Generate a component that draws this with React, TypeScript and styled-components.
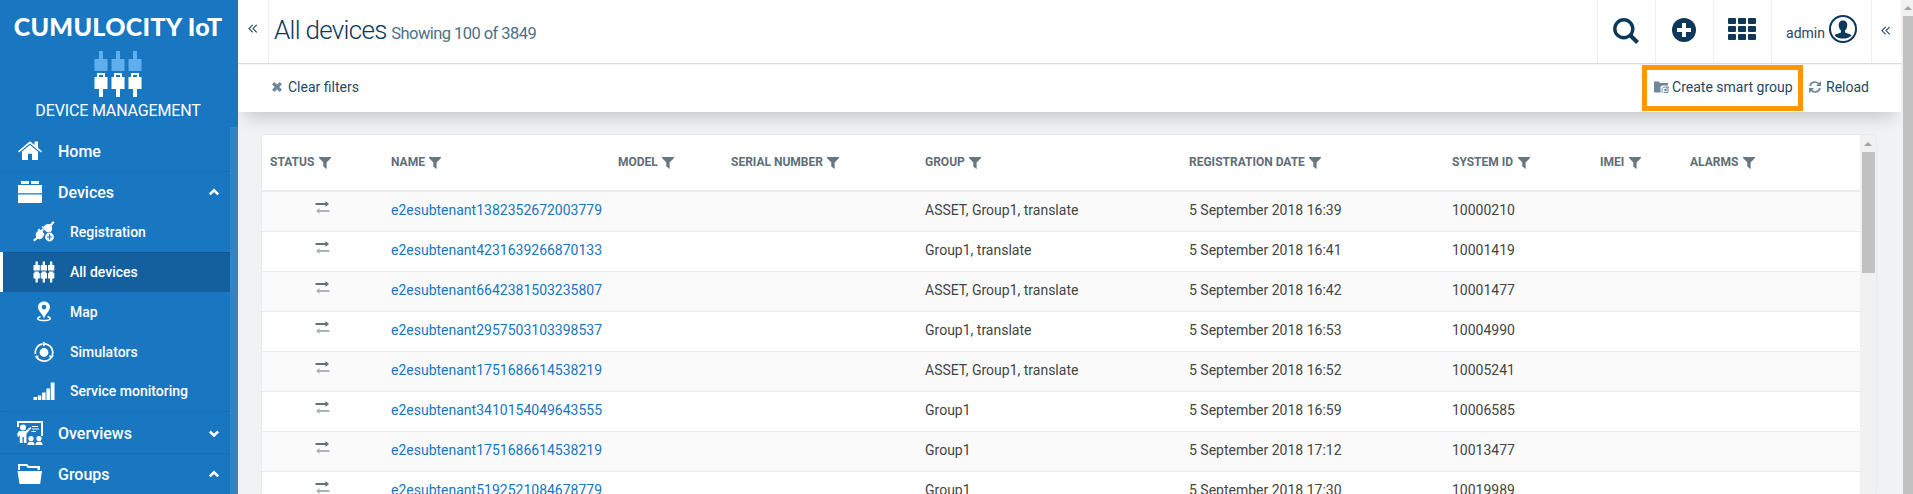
import React from "react";
import styled, { createGlobalStyle, css } from "styled-components";

const Global = createGlobalStyle`
  * { box-sizing: border-box; }
  html, body { margin: 0; padding: 0; overflow: hidden; }
  body { font-family: Roboto, "Liberation Sans", sans-serif; font-size: 14px; color: #444; background: #f0f2f4; }
`;

const Page = styled.div`
  display: flex;
  width: 1913px;
  height: 494px;
  overflow: hidden;
`;

/* ---------- sidebar ---------- */
const Sidebar = styled.aside`
  width: 238px;
  flex: none;
  position: relative;
  z-index: 1;
  background: #1976c1;
  color: #fff;
`;
const Brand = styled.div`
  height: 127px;
  display: flex;
  flex-direction: column;
  align-items: center;
  padding: 12px 2px 0 0;
`;
const Logo = styled.div`
  font: 900 25px/29px Lato, sans-serif;
  white-space: nowrap;
  letter-spacing: 0.3px;
`;
const PlugLogo = styled.svg`
  display: block;
  margin-top: 10px;
`;
const AppName = styled.div`
  font-size: 16px;
  line-height: 20px;
  margin-top: 4px;
  letter-spacing: -0.15px;
  white-space: nowrap;
`;
const NavArea = styled.div`
  display: flex;
  height: 367px;
`;
const Nav = styled.nav`
  width: 230px;
  padding-top: 3px;
`;
const NavScroll = styled.div`
  width: 8px;
  background: #3085c7;
`;
const NavItem = styled.div<{ $gap?: boolean }>`
  height: ${(p) => (p.$gap ? 42 : 40)}px;
  display: flex;
  align-items: center;
  padding: 1px 10px 0 17px;
  border-bottom: 1px solid ${(p) => (p.$gap ? "#176eb5" : "transparent")};
  font-size: 16px;
  font-weight: 500;
`;
const NavLabel = styled.span`
  flex: 1;
  margin-left: 15px;
`;
const SubItem = styled.div<{ $active?: boolean; $last?: boolean }>`
  height: 40px;
  display: flex;
  align-items: center;
  padding: 0 0 1px 30px;
  font-size: 14px;
  font-weight: 500;
  border-left: 3px solid transparent;
  ${(p) => p.$last && css`border-bottom: 1px solid #176eb5;`}
  ${(p) =>
    p.$active &&
    css`
      background: #14609f;
      border-left-color: #fff;
      box-shadow: inset 0 1px 0 #125690;
    `}
`;
const SubLabel = styled.span`
  margin-left: 15px;
`;

/* ---------- main ---------- */
const Main = styled.main`
  width: 1663px;
  flex: none;
  display: flex;
  flex-direction: column;
`;
const Header = styled.header`
  height: 64px;
  display: flex;
  background: #fff;
  border-bottom: 1px solid #d9dcdf;
  color: #0b385b;
`;
const Toggle = styled.div`
  width: 31px;
  padding-top: 24px;
  display: flex;
  justify-content: center;
  align-items: flex-start;
  border-right: 1px solid #eef0f1;
`;
const Title = styled.h1`
  margin: 0;
  padding: 13px 0 0 5px;
  flex: 1;
  font-size: 26px;
  line-height: 34px;
  font-weight: 300;
  letter-spacing: -0.7px;
`;
const Count = styled.small`
  font-size: 16.5px;
  font-weight: 400;
  color: #4e6f88;
  letter-spacing: -0.56px;
  margin-left: -1px;
`;
const HeadCell = styled.div<{ $w: number; $top: number; $right?: number }>`
  width: ${(p) => p.$w}px;
  display: flex;
  justify-content: center;
  align-items: flex-start;
  padding: ${(p) => p.$top}px ${(p) => p.$right ?? 2}px 0 0;
  border-left: 1px solid #eef0f1;
`;
const User = styled.span`
  font-size: 14px;
  line-height: 16px;
  margin: 10px 4px 0 0;
  color: #23496a;
`;
const Actions = styled.div`
  height: 48px;
  display: flex;
  justify-content: space-between;
  align-items: flex-start;
  background: #fff;
  box-shadow: inset 0 1px 0 #f3f4f5, 0 11px 18px -7px rgba(0, 0, 0, 0.2);
  padding: 0 32px 0 34px;
  color: #23496a;
`;
const ActionGroup = styled.div`
  display: flex;
`;
const Action = styled.div<{ $gap: number }>`
  display: flex;
  align-items: center;
  gap: ${(p) => p.$gap}px;
  height: 46px;
  white-space: nowrap;
  svg { color: #6d8799; }
`;
const Highlight = styled.div`
  height: 46px;
  margin: 1px 6px 0 0;
  width: 161px;
  border: 5px solid #ff9800;
  display: flex;
  align-items: flex-start;
  padding-left: 7px;
  ${Action} { height: 34px; }
`;
const Content = styled.section`
  padding: 23px 25px 0 24px;
`;
const Card = styled.div`
  display: flex;
  height: 359px;
  overflow: hidden;
  background: #fff;
  border-radius: 3px 3px 0 0;
  box-shadow: 0 0 2px rgba(0, 0, 0, 0.12);
`;
const Table = styled.table`
  width: 1598px;
  table-layout: fixed;
  border-collapse: separate;
  border-spacing: 0;
`;
const Th = styled.th`
  height: 57px;
  padding: 0 0 2px 8px;
  border-bottom: 2px solid #e9eaeb;
  text-align: left;
  font-size: 12px;
  font-weight: 700;
  color: #5f6e79;
  white-space: nowrap;
  svg { margin-left: 4.5px; vertical-align: -3px; }
`;
const Tr = styled.tr<{ $odd: boolean }>`
  background: ${(p) => (p.$odd ? "#fafafa" : "#fff")};
`;
const Td = styled.td`
  height: 40px;
  padding: 0 0 3px 8px;
  border-bottom: 1px solid #e9eaeb;
  white-space: nowrap;
`;
const StatusTd = styled(Td)`
  padding: 0 0 8px 53px;
  svg { display: block; }
`;
const Link = styled.a`
  color: #1776bf;
`;
const CardScroll = styled.div`
  width: 17px;
  background: #f1f1f1;
  display: flex;
  flex-direction: column;
  align-items: center;
  padding-top: 6px;
`;
const Thumb = styled.div<{ $w: number; $h: number }>`
  width: ${(p) => p.$w}px;
  height: ${(p) => p.$h}px;
  background: #c1c1c1;
  margin-top: 6px;
`;
const PageScroll = styled.div`
  width: 12px;
  flex: none;
  background: #f1f1f1;
  display: flex;
  flex-direction: column;
  align-items: flex-end;
  padding-top: 5px;
`;
const Arrow = styled.i`
  width: 0;
  height: 0;
  border: 4px solid transparent;
  border-top-width: 0;
  border-bottom-color: #a3a3a3;
  margin-top: 1px;
  margin-right: 1px;
`;

/* ---------- icons ---------- */
const Chevrons = () => (
  <svg width="10" height="10" viewBox="0 0 10 10" fill="none" stroke="#23496a" strokeWidth="1.1">
    <path d="M4.7 .8 1 4.6 4.7 8.4M8.7 .8 5 4.6 8.7 8.4" />
  </svg>
);
const Caret = ({ up }: { up?: boolean }) => (
  <svg width="12" height="9" viewBox="0 0 12 9" fill="none" stroke="#fff" strokeWidth="2.5">
    <path d={up ? "M1.8 6.3 6 2.3 10.2 6.3" : "M1.8 2.5 6 6.5 10.2 2.5"} />
  </svg>
);
const Funnel = () => (
  <svg width="12" height="12" viewBox="0 0 12 12" fill="#667782">
    <path d="M0 0H12V1L7.6 5.6V12L4.3 9.4V5.6L0 1Z" />
  </svg>
);
const Exchange = () => (
  <svg width="15" height="13" viewBox="0 0 15 13">
    <path d="M.5 2H10.5V0L14 3 10.5 6V4H.5Z" fill="#61717d" />
    <path d="M14.5 9H4.5V7L1 10 4.5 13V11H14.5Z" fill="#a9b4bb" />
  </svg>
);
const HomeIcon = () => (
  <svg width="26" height="24" viewBox="0 0 26 24" fill="#fff">
    <path d="M1 12.2 12.9 2.2 17.5 6V2.5H21V9L25 12.2 24 13.5 12.9 4.4 2 13.5Z" />
    <path d="M5 12.6 12.9 6 21 12.6V21H15V14.7H11V21H5Z" />
  </svg>
);
const DevicesIcon = () => (
  <svg width="26" height="24" viewBox="0 0 26 24" fill="#fff">
    <path d="M4 1H12V4H4ZM14 1H22V4H14ZM1 5H25V13.2H1ZM1 14.5H25V23H1Z" />
  </svg>
);
const OverviewIcon = () => (
  <svg width="26" height="26" viewBox="0 0 26 26" fill="#fff">
    <path d="M0 1H26V16H24V3H2V7H0Z" />
    <path d="M15 6H21V7H15ZM15 8.5H22V9.5H15ZM14.5 11H19V12H14.5Z" />
    <circle cx="6" cy="7.5" r="3" />
    <path d="M2 11H8.5L13.5 7 14.5 8.2 9.5 13.5V23H6.8V17H5.5V23H2.8V15L1 17.5 .2 14Z" />
    <circle cx="14" cy="18.5" r="2.6" /><circle cx="22" cy="18.5" r="2.6" />
    <path d="M10.5 25C10.5 22 12 21.7 14 21.7S17.5 22 17.5 25ZM18.5 25C18.5 22 20 21.7 22 21.7S25.5 22 25.5 25Z" />
  </svg>
);
const FolderIcon = () => (
  <svg width="26" height="24" viewBox="0 0 26 24" fill="#fff">
    <path d="M1 2H10L12 4H23V8H20.5V6H11L9 4H3V8H1ZM.5 9H25L23.2 22H2.5Z" />
  </svg>
);
const RegistrationIcon = () => (
  <svg width="22" height="21" viewBox="0 0 22 21" fill="#fff">
    <path d="M20 0 21.5 1.5 18.5 5C20 8 18.5 10.5 16.5 12L10.5 6C12.5 3 15 2.5 17 3.5Z" />
    <path d="M9.5 5 18 13 16.8 14 8.5 6Z" />
    <path d="M4.5 9 6 7.5 7.7 9.2 9.5 7.5 11 9 9.5 11 11.5 13 10 16C8.5 18.5 6 18.5 4.5 17.7L1.5 20.5 0 19 3.3 16.3C2 13 3.5 11 5 10Z" />
    <circle cx="16.5" cy="16" r="5.3" fill="#1976c1" /><circle cx="16.5" cy="16" r="4.4" />
    <path d="M13.8 16H19.2M16.5 13.3V18.7" stroke="#1976c1" strokeWidth="1.2" />
  </svg>
);
const AllDevicesIcon = () => (
  <svg width="22" height="22" viewBox="0 0 22 22" fill="#fff">
    {[0.5, 7.7, 15].map((x) => (
      <g key={x} transform={`translate(${x} 0)`}>
        <path d="M2 .5H4.3V4H6.3V9.5H0V4H2ZM1 10.5H5.3V12H6.3V17.5H4.3V21.5H2V17.5H0V12H1Z" />
      </g>
    ))}
  </svg>
);
const MapIcon = () => (
  <svg width="22" height="21" viewBox="0 0 22 21" fill="#fff">
    <path fillRule="evenodd" d="M11 .5C7.4 .5 5 3 5 6.3 5 10 9 12 11 17.5 13 12 17 10 17 6.3 17 3 14.6 .5 11 .5ZM11 3.8A2.3 2.3 0 1 1 11 8.4 2.3 2.3 0 0 1 11 3.8Z" />
    <path d="M7.5 15.5C3 17 4 19.5 11 19.5S19 17 14.5 15.5" fill="none" stroke="#fff" strokeWidth="1.5" />
  </svg>
);
const SimIcon = () => (
  <svg width="22" height="22" viewBox="0 0 22 22" fill="#fff">
    <circle cx="11" cy="11.5" r="4.4" />
    <g fill="none" stroke="#fff" strokeWidth="1.7">
      <path d="M13 3A8.8 8.8 0 0 1 19.3 14.5M17 17.8A8.8 8.8 0 0 1 4 16.8M2.3 13A8.8 8.8 0 0 1 9.5 2.9" />
    </g>
    <path d="M10 .5 14 3 10 5.5ZM21 14.5 17.5 18.8 16 14.5ZM1.5 15 5.5 14.5 5 18.8Z" />
  </svg>
);
const SignalIcon = () => (
  <svg width="22" height="20" viewBox="0 0 22 20" fill="#fff">
    <path d="M.5 16H4V19H.5ZM4.8 14.5H8.3V19H4.8ZM9.1 11.5H12.6V19H9.1ZM13.4 7.5H16.9V19H13.4ZM17.7 1.5H21.5V19H17.7Z" />
  </svg>
);

const columns: [string, number][] = [
  ["STATUS", 121], ["NAME", 227], ["MODEL", 113], ["SERIAL NUMBER", 194], ["GROUP", 264],
  ["REGISTRATION DATE", 263], ["SYSTEM ID", 148], ["IMEI", 90], ["ALARMS", 178],
];
const rows = [
  ["e2esubtenant1382352672003779", "ASSET, Group1, translate", "16:39", "10000210"],
  ["e2esubtenant4231639266870133", "Group1, translate", "16:41", "10001419"],
  ["e2esubtenant6642381503235807", "ASSET, Group1, translate", "16:42", "10001477"],
  ["e2esubtenant2957503103398537", "Group1, translate", "16:53", "10004990"],
  ["e2esubtenant1751686614538219", "ASSET, Group1, translate", "16:52", "10005241"],
  ["e2esubtenant3410154049643555", "Group1", "16:59", "10006585"],
  ["e2esubtenant1751686614538219", "Group1", "17:12", "10013477"],
  ["e2esubtenant5192521084678779", "Group1", "17:30", "10019989"],
];

export default function App() {
  return (
    <Page>
      <Global />
      <Sidebar>
        <Brand>
          <Logo>CUMULOCITY IoT</Logo>
          <PlugLogo width="48" height="46" viewBox="0 0 48 46">
            {[0, 17, 34].map((x) => (
              <g key={x} transform={`translate(${x} 0)`}>
                <path d="M5 0H9V8H13.5V20H.5V8H5Z" fill="#60aeec" />
                <path fillRule="evenodd" d="M3 22H11V26H13.5V38H9V46H5V38H.5V26H3ZM5 24V26H9V24Z" fill="#fff" />
              </g>
            ))}
          </PlugLogo>
          <AppName>DEVICE MANAGEMENT</AppName>
        </Brand>
        <NavArea>
          <Nav>
            <NavItem $gap><HomeIcon /><NavLabel>Home</NavLabel></NavItem>
            <NavItem><DevicesIcon /><NavLabel>Devices</NavLabel><Caret up /></NavItem>
            <SubItem><RegistrationIcon /><SubLabel>Registration</SubLabel></SubItem>
            <SubItem $active><AllDevicesIcon /><SubLabel>All devices</SubLabel></SubItem>
            <SubItem><MapIcon /><SubLabel>Map</SubLabel></SubItem>
            <SubItem><SimIcon /><SubLabel>Simulators</SubLabel></SubItem>
            <SubItem $last><SignalIcon /><SubLabel>Service monitoring</SubLabel></SubItem>
            <NavItem $gap><OverviewIcon /><NavLabel>Overviews</NavLabel><Caret /></NavItem>
            <NavItem><FolderIcon /><NavLabel>Groups</NavLabel><Caret up /></NavItem>
          </Nav>
          <NavScroll />
        </NavArea>
      </Sidebar>
      <Main>
        <Header>
          <Toggle><Chevrons /></Toggle>
          <Title>All devices <Count>Showing 100 of 3849</Count></Title>
          <HeadCell $w={58} $top={18}>
            <svg width="26" height="26" viewBox="0 0 26 26" fill="none" stroke="#0b385b">
              <circle cx="10.8" cy="10.8" r="9" strokeWidth="3.4" /><path d="M17.5 17.5 24.5 24.5" strokeWidth="4" />
            </svg>
          </HeadCell>
          <HeadCell $w={58} $top={18}>
            <svg width="24" height="24" viewBox="0 0 24 24">
              <circle cx="12" cy="12" r="12" fill="#0b385b" /><path d="M5 12H19M12 5V19" stroke="#fff" strokeWidth="4" />
            </svg>
          </HeadCell>
          <HeadCell $w={58} $top={18}>
            <svg width="28" height="22" viewBox="0 0 28 22" fill="#0b385b">
              {[0, 8, 16].map((y) => [0, 10, 20].map((x) => <rect key={`${x}-${y}`} x={x} y={y} width="8" height="6" rx="1" />))}
            </svg>
          </HeadCell>
          <HeadCell $w={100} $top={15} $right={0}>
            <User>admin</User>
            <svg width="28" height="28" viewBox="0 0 28 28">
              <circle cx="14" cy="14" r="13" fill="none" stroke="#0b385b" strokeWidth="2" />
              <path d="M14 5.5C10.5 5.5 9.5 8 9.8 11 10 13 11 14.5 12 15.5V17.5C10.5 18.5 7 18.5 5.5 20.5 8 23 11 23.5 14 23.5S20 23 22.5 20.5C21 18.5 17.5 18.5 16 17.5V15.5C17 14.5 18 13 18.2 11 18.5 8 17.5 5.5 14 5.5Z" fill="#0b385b" />
            </svg>
          </HeadCell>
          <HeadCell $w={30} $top={26}><Chevrons /></HeadCell>
        </Header>
        <Actions>
          <Action $gap={6}>
            <svg width="10" height="10" viewBox="0 0 10 10"><path d="M1.2 1.2 8.8 8.8M8.8 1.2 1.2 8.8" stroke="currentColor" strokeWidth="3.3" /></svg>
            Clear filters
          </Action>
          <ActionGroup>
            <Highlight>
              <Action $gap={3}>
                <svg width="15" height="12" viewBox="0 0 15 12" fill="currentColor">
                  <path d="M0 .5H5.5V2H14V4.5H8L6.5 6V11.5H0Z" />
                  <path d="M8 11.5V8.5C8 7 9 6 11 6H14.5V7H12M9.5 11.5H14V7.5" fill="none" stroke="currentColor" />
                  <circle cx="11.5" cy="9" r="1.3" />
                </svg>
                Create smart group
              </Action>
            </Highlight>
            <Action $gap={5}>
              <svg width="12" height="12" viewBox="0 0 12 12" fill="none" stroke="currentColor" strokeWidth="1.6">
                <path d="M1 5A5 5 0 0 1 10 3.2M11 7A5 5 0 0 1 2 8.8" />
                <path d="M12 0V5H7ZM0 12V7H5Z" fill="currentColor" stroke="none" />
              </svg>
              Reload
            </Action>
          </ActionGroup>
        </Actions>
        <Content>
          <Card>
            <Table>
              <colgroup>{columns.map(([n, w]) => <col key={n} style={{ width: w }} />)}</colgroup>
              <thead><tr>{columns.map(([n]) => <Th key={n}>{n}<Funnel /></Th>)}</tr></thead>
              <tbody>
                {rows.map(([name, group, time, id], i) => (
                  <Tr key={id} $odd={i % 2 === 0}>
                    <StatusTd><Exchange /></StatusTd>
                    <Td><Link>{name}</Link></Td><Td /><Td />
                    <Td>{group}</Td>
                    <Td>5 September 2018 {time}</Td>
                    <Td>{id}</Td><Td /><Td />
                  </Tr>
                ))}
              </tbody>
            </Table>
            <CardScroll><Arrow /><Thumb $w={13} $h={121} /></CardScroll>
          </Card>
        </Content>
      </Main>
      <PageScroll><Arrow /><Thumb $w={10} $h={478} /></PageScroll>
    </Page>
  );
}
